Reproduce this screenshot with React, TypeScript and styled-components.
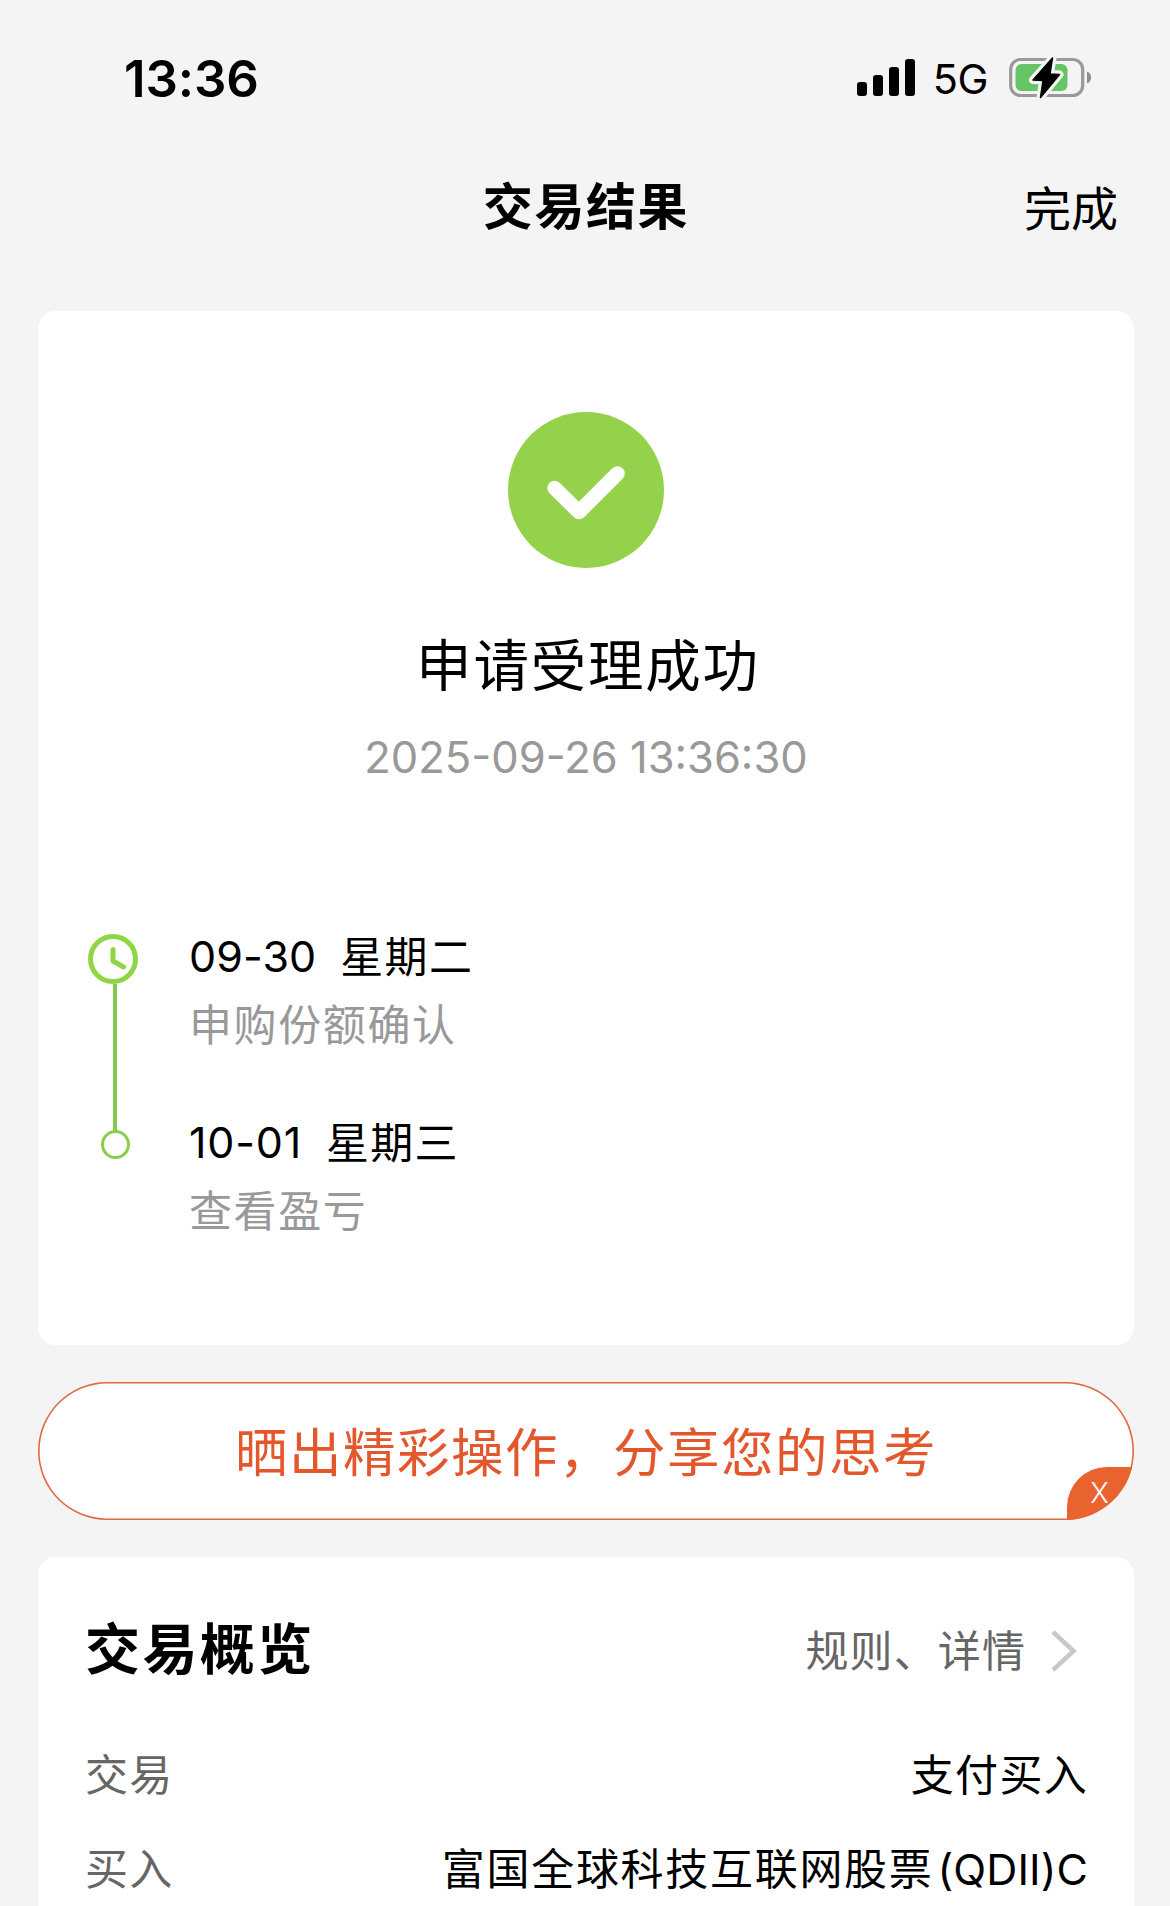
import React from 'react';
import styled, { createGlobalStyle } from 'styled-components';

const GlobalStyle = createGlobalStyle`
  *, *::before, *::after { box-sizing: border-box; }
  body {
    margin: 0;
    background: #f4f4f4;
    color: #000;
    font-family: Inter, "Noto Sans CJK SC", sans-serif;
  }
`;

const Screen = styled.div`
  width: 1170px;
  height: 1906px;
  overflow: hidden;
  background: #f4f4f4;
  display: flex;
  flex-direction: column;
`;

const StatusBar = styled.div`
  height: 156px;
  flex: none;
  display: flex;
  align-items: center;
  justify-content: space-between;
  padding: 0 77px 0 124px;
`;

const Clock = styled.span`
  margin-top: 2px;
  font-size: 51px;
  font-weight: 600;
  line-height: 60px;
  letter-spacing: -0.1px;
`;

const StatusIcons = styled.div`
  display: flex;
  align-items: center;
`;

const Network = styled.span`
  font-size: 41.5px;
  line-height: 50px;
  letter-spacing: -0.5px;
  margin: 2px 21px 0 18px;
`;

const Header = styled.header`
  height: 98px;
  flex: none;
  display: grid;
  grid-template-columns: 1fr auto 1fr;
  align-items: center;
  padding: 0 52px;
`;

const PageTitle = styled.h1`
  grid-column: 2;
  margin: 0;
  padding: 4px 0 0 2px;
  font-size: 50px;
  font-weight: 700;
  line-height: 70px;
  letter-spacing: 1.6px;
`;

const DoneButton = styled.button`
  justify-self: end;
  border: 0;
  padding: 7px 0 0;
  background: none;
  color: #000;
  font-family: inherit;
  font-size: 47px;
  line-height: 65px;
`;

const Content = styled.main`
  flex: none;
  padding: 57px 36px 0 38px;
  display: flex;
  flex-direction: column;
  gap: 37px;
`;

const Card = styled.section<{ $height: number }>`
  height: ${(p) => p.$height}px;
  border-radius: 18px;
  background: #fff;
`;

const ResultCard = styled(Card)`
  display: flex;
  flex-direction: column;
  align-items: center;
  padding: 101px 50px 0;
`;

const ResultTitle = styled.h2`
  margin: 58px 0 0;
  padding-left: 4px;
  font-size: 55.5px;
  font-weight: 400;
  line-height: 80px;
  letter-spacing: 1.8px;
`;

const ResultTime = styled.time`
  margin-top: 21px;
  color: #999;
  font-size: 43.5px;
  line-height: 60px;
`;

const Timeline = styled.div`
  align-self: stretch;
  margin-top: 135px;
  display: flex;
`;

const Rail = styled.div`
  width: 55px;
  margin-right: 46px;
  padding-top: 12px;
  display: flex;
  flex-direction: column;
  align-items: center;
`;

const ClockIcon = styled.svg`
  align-self: flex-start;
  flex: none;
`;

const RailLine = styled.div`
  width: 4px;
  height: 146px;
  margin-left: -1px;
  background: #86c850;
`;

const RailDot = styled.div`
  width: 29px;
  height: 29px;
  border: 3px solid #86cf46;
  border-radius: 50%;
`;

const Steps = styled.div`
  display: flex;
  flex-direction: column;
  gap: 49px;
`;

const StepDate = styled.div`
  display: flex;
  gap: 24px;
  font-size: 43px;
  line-height: 68px;
`;

const DateText = styled.span<{ $tracking: number }>`
  letter-spacing: ${(p) => p.$tracking}px;
`;

const Weekday = styled.span`
  padding-top: 1px;
  letter-spacing: 1.3px;
`;

const StepNote = styled.div`
  color: #999;
  font-size: 43px;
  line-height: 68px;
  letter-spacing: 1.6px;
`;

const ShareButton = styled.div`
  position: relative;
  height: 138px;
  border-radius: 69px;
  box-shadow: inset 0 0 0 1.6px #dd6a42;
  overflow: hidden;
  background: #fff;
  color: #e4572c;
  display: flex;
  align-items: center;
  justify-content: center;
  padding-top: 3px;
  font-size: 52.5px;
  line-height: 72px;
  letter-spacing: 1.5px;
`;

const DismissCorner = styled.button`
  position: absolute;
  right: 0;
  bottom: 0;
  width: 67px;
  height: 53px;
  border: 0;
  border-radius: 40px 0 0 0;
  padding: 0 2px 0 0;
  background: #e9632f;
  color: #fff;
  font-family: inherit;
  font-size: 28px;
  font-weight: 300;
  line-height: 53px;
  text-align: center;
`;

const OverviewCard = styled(Card)`
  padding: 52px 46px 0 47px;
`;

const OverviewHeader = styled.div`
  height: 80px;
  margin-bottom: 39px;
  display: flex;
  align-items: center;
  justify-content: space-between;
`;

const OverviewTitle = styled.h2`
  margin: 0;
  font-size: 55px;
  font-weight: 700;
  line-height: 80px;
  letter-spacing: 2.4px;
`;

const DetailLink = styled.a`
  display: flex;
  align-items: center;
  gap: 25px;
  padding: 3px 11px 0 0;
  color: #666;
  font-size: 43px;
  line-height: 60px;
  letter-spacing: 1.1px;
`;

const Row = styled.div`
  height: 94px;
  display: flex;
  align-items: center;
  justify-content: space-between;
  font-size: 43px;
  line-height: 60px;
  letter-spacing: 1.3px;
`;

const RowLabel = styled.span`
  color: #666;
`;

const RowValue = styled.span`
  display: flex;
  gap: 4px;
`;

const FundName = styled.span`
  letter-spacing: 1.7px;
`;

const Latin = styled.span`
  letter-spacing: 0.1px;
`;

const SignalIcon = () => (
  <svg width="58" height="38" viewBox="0 0 58 38">
    <rect x="0" y="23" width="10" height="14" rx="3" />
    <rect x="16" y="16" width="10" height="21" rx="3" />
    <rect x="32" y="8" width="10" height="29" rx="3" />
    <rect x="48" y="0" width="10" height="37" rx="3" />
  </svg>
);

const BOLT = 'M43.5 1 L24 23 L34 23.5 L31.5 40.5 L50.5 17.5 L41 17 Z';

const BatteryIcon = () => (
  <svg width="84" height="42" viewBox="0 0 84 42">
    <rect x="1.7" y="2.5" width="72" height="36" rx="10" fill="none" stroke="#999" strokeWidth="3.2" />
    <rect x="6.5" y="7" width="52" height="27" rx="6" fill="#65c466" />
    <path d="M78 14.5 C83.5 16.5 83.5 24.5 78 26.5 Z" fill="#8c8c8c" />
    <path d={BOLT} fill="#f4f4f4" stroke="#f4f4f4" strokeWidth="8" strokeLinejoin="round" />
    <path d={BOLT} fill="#000" stroke="#000" strokeWidth="1.5" strokeLinejoin="round" />
  </svg>
);

const SuccessIcon = () => (
  <svg width="156" height="156" viewBox="0 0 156 156">
    <circle cx="78" cy="78" r="78" fill="#93d24a" />
    <path d="M46.5 76 L71 100 L109.5 61.5" fill="none" stroke="#fff" strokeWidth="14.5" strokeLinecap="round" strokeLinejoin="round" />
  </svg>
);

const STEPS = [
  { date: '09-30', weekday: '星期二', note: '申购份额确认', tracking: 0.1 },
  { date: '10-01', weekday: '星期三', note: '查看盈亏', tracking: 0.8 },
];

export default function App() {
  return (
    <>
      <GlobalStyle />
      <Screen>
        <StatusBar>
          <Clock>13:36</Clock>
          <StatusIcons>
            <SignalIcon />
            <Network>5G</Network>
            <BatteryIcon />
          </StatusIcons>
        </StatusBar>
        <Header>
          <PageTitle>交易结果</PageTitle>
          <DoneButton>完成</DoneButton>
        </Header>
        <Content>
          <ResultCard $height={1034}>
            <SuccessIcon />
            <ResultTitle>申请受理成功</ResultTitle>
            <ResultTime>2025-09-26 13:36:30</ResultTime>
            <Timeline>
              <Rail>
                <ClockIcon width="50" height="50" viewBox="0 0 50 50" fill="none" stroke="#8fd645">
                  <circle cx="25" cy="25" r="22.5" strokeWidth="5" />
                  <path d="M25 15.5 V27 L35.5 33" strokeWidth="5" strokeLinecap="round" strokeLinejoin="round" />
                </ClockIcon>
                <RailLine />
                <RailDot />
              </Rail>
              <Steps>
                {STEPS.map((step) => (
                  <div key={step.date}>
                    <StepDate>
                      <DateText $tracking={step.tracking}>{step.date}</DateText>
                      <Weekday>{step.weekday}</Weekday>
                    </StepDate>
                    <StepNote>{step.note}</StepNote>
                  </div>
                ))}
              </Steps>
            </Timeline>
          </ResultCard>
          <ShareButton>
            晒出精彩操作，分享您的思考
            <DismissCorner>X</DismissCorner>
          </ShareButton>
          <OverviewCard $height={500}>
            <OverviewHeader>
              <OverviewTitle>交易概览</OverviewTitle>
              <DetailLink>
                规则、详情
                <svg width="26" height="42" viewBox="0 0 26 42" fill="none" stroke="#c8c8c8" strokeWidth="4.5">
                  <path d="M2 2 L22.5 21 L2 40" />
                </svg>
              </DetailLink>
            </OverviewHeader>
            <Row>
              <RowLabel>交易</RowLabel>
              <RowValue>支付买入</RowValue>
            </Row>
            <Row>
              <RowLabel>买入</RowLabel>
              <RowValue>
                <FundName>富国全球科技互联网股票</FundName>
                <Latin>(QDII)C</Latin>
              </RowValue>
            </Row>
          </OverviewCard>
        </Content>
      </Screen>
    </>
  );
}
